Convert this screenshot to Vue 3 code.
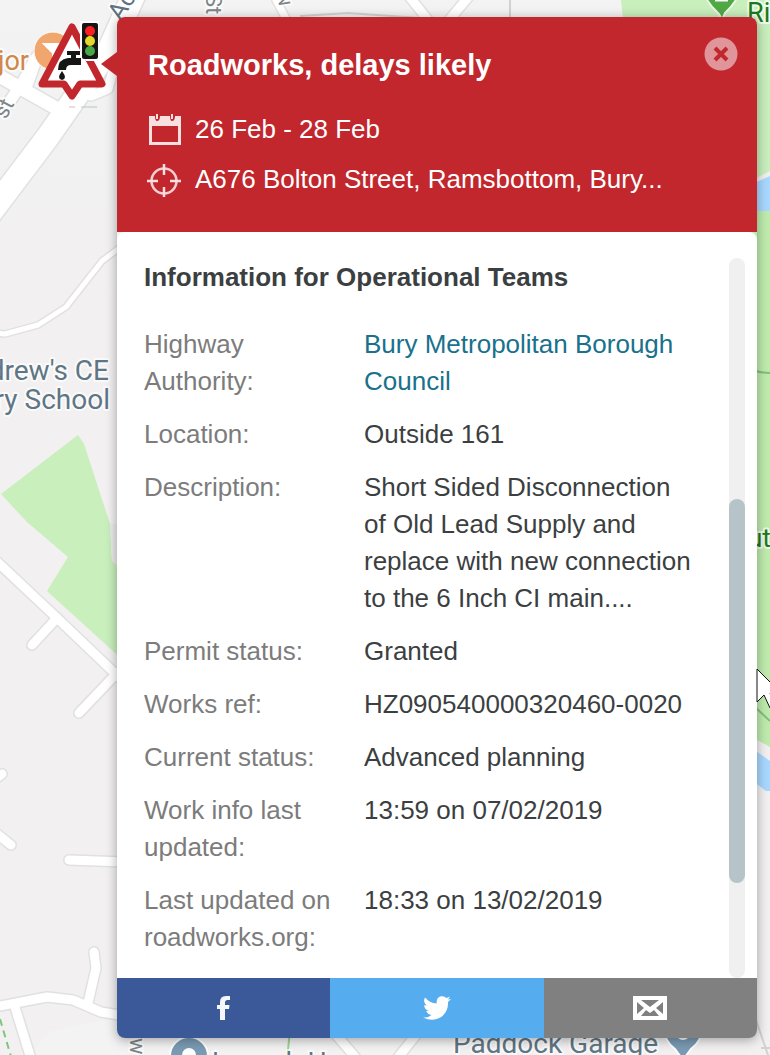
<script setup>
const details = [
  { label: 'Highway Authority:', value: 'Bury Metropolitan Borough Council', link: true },
  { label: 'Location:', value: 'Outside 161' },
  { label: 'Description:', value: 'Short Sided Disconnection of Old Lead Supply and replace with new connection to the 6 Inch CI main....' },
  { label: 'Permit status:', value: 'Granted' },
  { label: 'Works ref:', value: 'HZ090540000320460-0020' },
  { label: 'Current status:', value: 'Advanced planning' },
  { label: 'Work info last updated:', value: '13:59 on 07/02/2019' },
  { label: 'Last updated on roadworks.org:', value: '18:33 on 13/02/2019' },
]

const roads = [
  { d: 'M136 -10 L110 48 L47 138 L-12 216', w: 23 },
  { d: 'M-8 72 L56 108', w: 13 },
  { d: 'M36 58 L24 80 L8 104', w: 11 },
  { d: 'M40 50 L28 84', w: 10 },
  { d: 'M91 96 L108 89 L120 45', w: 9 },
  { d: 'M-4 333 L5 334 L38 325 L66 307 L102 261 L122 246', w: 5 },
  { d: 'M-10 555 L57 618 L122 680', w: 9 },
  { d: 'M57 618 L32 645', w: 9 },
  { d: 'M118 672 L79 713', w: 9 },
  { d: 'M-10 783 L2 774', w: 9 },
  { d: 'M-8 830 L11 845', w: 9 },
  { d: 'M69 860 L125 862', w: 9 },
  { d: 'M-5 1007 L47 997 L73 1000 L101 1012 L125 1016', w: 9 },
  { d: 'M94 952 L96 968 L88 1003', w: 9 },
  { d: 'M14 1004 L32 1062', w: 9 },
  { d: 'M408 -5 L432 25', w: 9 },
  { d: 'M470 -5 L445 25', w: 9 },
  { d: 'M276 0 L290 26', w: 7 },
  { d: 'M332 1030 L362 1065', w: 9 },
  { d: 'M420 1030 L392 1065', w: 9 },
]
</script>

<template>
  <main class="page">
    <svg class="map" aria-hidden="true">
      <defs>
        <linearGradient id="land" x1="0" y1="0" x2="0" y2="1">
          <stop offset="0" stop-color="#f3f3f3" />
          <stop offset="0.3" stop-color="#f2f0f1" />
          <stop offset="1" stop-color="#f2f0f1" />
        </linearGradient>
      </defs>
      <rect width="100%" height="100%" fill="url(#land)" />
      <path d="M30 1055 L50 1031 L116 1018 H460 V1055Z" fill="#f3f3f3" />
      <path d="M621 0 H2000 V176 L757 180 L625 40Z" fill="#c9efbd" />
      <path d="M740 209 H2000 V747 L770 747 L745 733Z" fill="#bfebad" />
      <path d="M745 184 L770 171 H2000 V209 H745Z" fill="#f2f0f1" />
      <path d="M745 187 L770 176 H2000 V206 L745 211Z" fill="#a9d8ff" />
      <path d="M745 743 L770 761 H2000 V791 H766 L745 775Z" fill="#a9d8ff" />
      <path d="M745 367 Q758 373 770 373 M745 698 L770 721" fill="none" stroke="#83bf7d" stroke-width="2" />
      <path d="M1 494 L78 435 L84 444 L110 524 L112 561 L125 570 V662 L47 591 L68 557 L27 522Z" fill="#c9efbd" />
      <path d="M110 524 L112 561 L120 568 V524Z" fill="#ebebeb" />
      <g fill="none" stroke-linecap="round" stroke-linejoin="round">
        <path v-for="r in roads" :key="r.d" :d="r.d" stroke="#e1e1e1" :stroke-width="r.w + 3" />
        <path v-for="r in roads" :key="r.d + 'f'" :d="r.d" stroke="#fff" :stroke-width="r.w" />
      </g>
      <path d="M300 16 L348 13 L420 18 M510 0 V18 M756 1020 L768 1055 M761 1048 H770" fill="none" stroke="#d2d2d2" stroke-width="2" />
      <path d="M0 1019 L12 1060" stroke="#7fc67b" stroke-width="2" stroke-dasharray="7 5" />
      <path d="M290 1030 L287 1060" stroke="#9bd692" stroke-width="2" />

      <circle cx="53" cy="51" r="19" fill="#f0a66c" stroke="#fff" stroke-width="1" />
      <path d="M44 44 H63 L54 54Z M53 54 V63" fill="#fff" stroke="#fff" stroke-width="2" />

      <g class="labels">
        <text x="-2" y="70" fill="#cf8748" font-size="27">jor</text>
        <text transform="translate(121 22) rotate(-58)" fill="#5d7381" font-size="25">Ac</text>
        <text transform="translate(6 120) rotate(-62)" fill="#7d8588" font-size="22">st</text>
        <text transform="translate(206 -6) rotate(90)" fill="#7d8588" font-size="22">St</text>
        <text transform="translate(274 -6) rotate(65)" fill="#7d8588" font-size="21">w</text>
        <text x="109" y="380" text-anchor="end" fill="#5f7684" font-size="28">drew's CE</text>
        <text x="110" y="409" text-anchor="end" fill="#5f7684" font-size="28">ry School</text>
        <text x="747" y="22" fill="#1b7a1b" font-size="27">Ri</text>
        <text x="748" y="547" fill="#1b7a1b" font-size="26">ut</text>
        <text x="453" y="1053" fill="#5f7684" font-size="28">Paddock Garage</text>
        <text x="212" y="1072" fill="#5f7684" font-size="27">Lounch Ho</text>
        <text transform="translate(130 1038) rotate(90)" fill="#7d8588" font-size="22">w</text>
      </g>

      <path d="M703 -8 H740 Q735 4 725 13 Q723 16 722 22 Q721 16 718 13 Q708 4 703 -8Z" fill="#4fa944" stroke="#eaf8e5" stroke-width="2" />
      <path d="M715 0 H728" stroke="#fff" stroke-width="3" />
      <circle cx="189" cy="1056" r="19" fill="#7a9bb4" stroke="#fff" stroke-width="2" />
      <circle cx="189" cy="1055" r="7" fill="#fff" />
      <path d="M664 1028 A19 19 0 0 1 702 1028 Q702 1041 691 1049 L683 1060 L675 1049 Q664 1041 664 1028Z" fill="#7a9bb4" stroke="#fff" stroke-width="2" />
      <circle cx="683" cy="1033" r="7" fill="#fff" />

      <path d="M69 107 H75" stroke="#e6b3b5" />
      <path d="M81 107 H97" stroke="#b8c4c3" />
      <path d="M72 27 L102 84 H80 L72 96 L64 84 H42Z" fill="#fff" stroke="#c1272d" stroke-width="7" stroke-linejoin="round" />
      <path d="M80 21 H99 V61 H86 L80 50Z" fill="#fff" />
      <rect x="82" y="23" width="16" height="36" rx="2" fill="#161616" />
      <circle cx="90" cy="31" r="5" fill="#fb1f24" />
      <circle cx="90" cy="41" r="5" fill="#e5d927" />
      <circle cx="90" cy="51" r="5" fill="#4ba646" />
      <path d="M67 51 H80 V55 H76 V58 H81 V65 H71 Q66 65 66 70 H58 Q58 59 68 58 H71 V55 H67Z M62 71 Q68 79 62 80 Q56 79 62 71Z" fill="#161616" />
    </svg>

    <article class="card">
      <header class="head">
        <div class="title-row">
          <h1>Roadworks, delays likely</h1>
          <button class="close" type="button" aria-label="Close">
            <svg viewBox="0 0 34 34" width="34" height="34">
              <circle cx="17" cy="17" r="16.5" fill="#e0959a" />
              <path d="M11 11 L23 23 M23 11 L11 23" stroke="#c1272d" stroke-width="4" />
            </svg>
          </button>
        </div>
        <p class="fact">
          <svg viewBox="0 0 34 34" width="34" height="34" aria-hidden="true">
            <path d="M1 3 H7 Q7 8 9 8 Q12 8 12 3 H22 Q22 8 24 8 Q27 8 27 3 H33 V32 H1Z M4 13 V29 H30 V13Z" fill="#f8dfe0" fill-rule="evenodd" />
            <path d="M9 1 V6 M24 1 V6" stroke="#f8dfe0" stroke-width="2" />
          </svg>
          <span>26 Feb - 28 Feb</span>
        </p>
        <p class="fact">
          <svg viewBox="0 0 34 34" width="34" height="34" aria-hidden="true">
            <circle cx="16" cy="18" r="12.5" fill="none" stroke="#f4cfd1" stroke-width="2.5" />
            <path d="M16 1 V12 M16 24 V34 M-1 18 H10 M22 18 H33" stroke="#f8dfe0" stroke-width="2.5" />
          </svg>
          <span class="place">A676 Bolton Street, Ramsbottom, Bury...</span>
        </p>
      </header>

      <section class="body">
        <div class="content">
          <h2>Information for Operational Teams</h2>
          <dl>
            <div v-for="item in details" :key="item.label" class="row">
              <dt>{{ item.label }}</dt>
              <dd>
                <a v-if="item.link" href="#">{{ item.value }}</a>
                <template v-else>{{ item.value }}</template>
              </dd>
            </div>
          </dl>
        </div>
        <div class="track" aria-hidden="true"><div class="thumb"></div></div>
      </section>

      <nav class="share" aria-label="Share">
        <a class="facebook" href="#" aria-label="Facebook">
          <svg viewBox="0 0 14 24" width="14" height="24"><path d="M3 24 V13 H0 V9 H3 V6 Q3 0 9 0 H13 V4 H10.500 Q8 4 8 6.500 V9 H12.500 L12 13 H8 V24Z" fill="#f4f6fa" /></svg>
        </a>
        <a class="twitter" href="#" aria-label="Twitter">
          <svg viewBox="0 0 28 24" width="28" height="24"><path d="M28 3 L25 6 Q25.500 14 20 19.500 Q11 27 0 21.500 Q5 22 8.500 19 Q4.500 18.500 3.200 15 H5.700 Q1.200 13.500 1.200 9 L3.700 9.700 Q-0.500 6 2 1.500 Q7 7.300 13.700 7.500 Q13 1.500 18 0.300 Q21 -0.300 23.500 2 L27 0.500 L25 3.500Z" fill="#fff" /></svg>
        </a>
        <a class="mail" href="#" aria-label="Email">
          <svg viewBox="0 0 34 24" width="34" height="24"><rect width="34" height="24" fill="#fff" /><path d="M8 4 H26 L17 11Z M4 6 L11 12 L4 18Z M30 6 L23 12 L30 18Z M8 20 L13 14 L17 17 L21 14 L26 20Z" fill="#808080" /></svg>
        </a>
      </nav>
    </article>

    <svg class="cursor" viewBox="0 0 28 42" width="28" height="42" aria-hidden="true">
      <path d="M1 1 V34 L8 27 L14 40 L19 38 L14 25 H25Z" fill="#fff" stroke="#111" />
    </svg>
  </main>
</template>

<style>
body {
  margin: 0;
}
</style>

<style scoped>
.page {
  position: relative;
  box-sizing: border-box;
  min-height: 100vh;
  padding: 17px 13px 17px 117px;
  overflow: hidden;
  font-family: "Liberation Sans", Arial, sans-serif;
  font-size: 26px;
  line-height: 37px;
}
.map {
  position: absolute;
  inset: 0;
  width: 100%;
  height: 100%;
}
.labels {
  font-family: Roboto, sans-serif;
  stroke: #fff;
  stroke-opacity: 0.7;
  stroke-width: 4px;
  stroke-linejoin: round;
  paint-order: stroke;
}
.card {
  position: relative;
  border-radius: 8px;
  box-shadow: 0 2px 12px rgba(0, 0, 0, 0.35);
}
.card::before {
  content: "";
  position: absolute;
  top: 35px;
  left: -16px;
  border: solid transparent;
  border-width: 12px 16px 12px 0;
  border-right-color: #c1272d;
}
.head {
  padding: 28px 19px 34px 31px;
  border-radius: 8px 8px 0 0;
  background: #c1272d;
  color: #fff;
}
.title-row {
  display: flex;
  justify-content: space-between;
  align-items: flex-start;
  margin-bottom: 26px;
}
h1 {
  margin: 0;
  font-size: 29px;
  line-height: 40px;
}
.close {
  display: flex;
  margin: -8px 0 0;
  padding: 0;
  border: 0;
  background: none;
}
.fact {
  display: flex;
  align-items: center;
  gap: 13px;
  margin: 0;
}
.fact + .fact {
  margin-top: 13px;
}
.fact svg {
  flex: none;
  overflow: visible;
}
.place {
  white-space: nowrap;
}
.body {
  display: flex;
  justify-content: space-between;
  padding: 0 12px 0 27px;
  border-radius: 8px 8px 0 0;
  background: #fff;
  color: #3c3f41;
}
.content {
  flex: 1;
  padding: 27px 0 22px;
  margin-right: 32px;
}
h2 {
  margin: 0 0 30px;
  font-size: 26px;
  line-height: 37px;
}
dl {
  display: grid;
  gap: 16px;
  margin: 0;
}
.row {
  display: grid;
  grid-template-columns: 200px 1fr;
  gap: 20px;
}
dt {
  color: #7c7c7c;
}
dd {
  margin: 0;
}
dd a {
  color: #19718c;
  text-decoration: none;
}
.track {
  display: grid;
  grid-template-rows: 241fr 384fr 95fr;
  width: 16px;
  margin-top: 26px;
  border-radius: 8px;
  background: #f0f0f0;
}
.thumb {
  grid-row: 2;
  border-radius: 8px;
  background: #b6c4c9;
}
.share {
  display: grid;
  grid-template-columns: repeat(3, 1fr);
  overflow: hidden;
  border-radius: 0 0 8px 8px;
}
.share a {
  display: flex;
  align-items: center;
  justify-content: center;
  height: 60px;
}
.facebook {
  background: #3b5998;
}
.twitter {
  background: #55acee;
}
.mail {
  background: #808080;
}
.cursor {
  position: absolute;
  left: 756px;
  top: 668px;
}
</style>
